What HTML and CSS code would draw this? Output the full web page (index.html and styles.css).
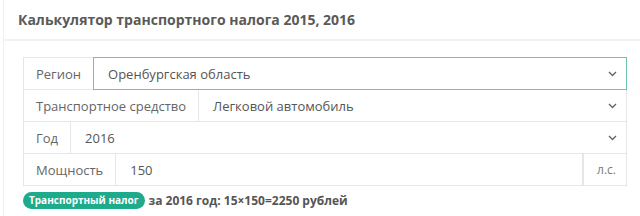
FILE: index.html
```html
<!DOCTYPE html>
<html lang="ru">
<head>
    <meta charset="UTF-8">
    <meta name="viewport" content="width=device-width, initial-scale=1.0">
    <title>Калькулятор транспортного налога</title>
    <link rel="stylesheet" href="styles.css">
</head>
<body>
    <div class="panel">
        <div class="panel-heading">Калькулятор транспортного налога 2015, 2016</div>
        <div class="panel-body">
            <div class="calc-form">
                <div class="input-group">
                    <span class="addon">Регион</span>
                    <div class="field select focused">
                        <span>Оренбургская область</span>
                        <svg class="caret" width="9" height="6" viewBox="0 0 9 6"><path d="M1 1l3.5 3.5L8 1" fill="none" stroke="#666" stroke-width="1.4"/></svg>
                    </div>
                </div>
                <div class="input-group">
                    <span class="addon">Транспортное средство</span>
                    <div class="field select">
                        <span>Легковой автомобиль</span>
                        <svg class="caret" width="9" height="6" viewBox="0 0 9 6"><path d="M1 1l3.5 3.5L8 1" fill="none" stroke="#666" stroke-width="1.4"/></svg>
                    </div>
                </div>
                <div class="input-group">
                    <span class="addon">Год</span>
                    <div class="field select">
                        <span>2016</span>
                        <svg class="caret" width="9" height="6" viewBox="0 0 9 6"><path d="M1 1l3.5 3.5L8 1" fill="none" stroke="#666" stroke-width="1.4"/></svg>
                    </div>
                </div>
                <div class="input-group">
                    <span class="addon">Мощность</span>
                    <div class="field">
                        <span>150</span>
                    </div>
                    <span class="addon addon-right">л.с.</span>
                </div>
            </div>
            <div class="result">
                <span class="label">Транспортный налог</span>
                <span class="result-text">за 2016 год: 15×150=2250 рублей</span>
            </div>
        </div>
    </div>
</body>
</html>
```

FILE: styles.css
```css
body {
    margin: 0;
    padding: 0;
    background: #fff;
    color: #555;
    font-family: "Open Sans", Arial, sans-serif;
    font-size: 13px;
}

.panel {
    margin-left: 3px;
    border-left: 1px solid #f0f0f0;
    height: 216px;
}

.panel-heading {
    height: 41px;
    box-sizing: border-box;
    padding: 10px 14px 0;
    font-weight: 700;
    font-size: 14px;
    color: #5a5a5a;
    border-bottom: 2px solid #f2f2f2;
}

.panel-body {
    padding: 16px 13px 0 19px;
}

.input-group {
    display: flex;
    height: 33px;
    box-sizing: border-box;
    margin-top: -1px;
}

.input-group:first-child {
    margin-top: 0;
}

.addon {
    display: flex;
    align-items: center;
    padding: 0 12px;
    border: 1px solid #e6e6e6;
    border-right: none;
    color: #666;
    white-space: nowrap;
}

.addon-right {
    border-right: 1px solid #e6e6e6;
    border-left: 1px solid #e6e6e6;
    padding: 0 10px 0 13px;
    font-size: 12px;
    color: #777;
}

.field {
    flex: 1;
    display: flex;
    align-items: center;
    justify-content: space-between;
    padding: 0 9px 0 14px;
    border: 1px solid #e6e6e6;
    color: #555;
}

.field.focused {
    border-color: #6cc4b3;
    position: relative;
    z-index: 1;
}

.caret {
    display: block;
}

.result {
    display: flex;
    align-items: center;
    margin-top: 6px;
}

.label {
    background: #1dab8c;
    color: #fff;
    font-weight: 700;
    font-size: 10px;
    padding: 1px 6px 2px;
    border-radius: 9px;
    line-height: 14px;
}

.result-text {
    margin-left: 4px;
    font-weight: 700;
    font-size: 12px;
    color: #555;
}
```
